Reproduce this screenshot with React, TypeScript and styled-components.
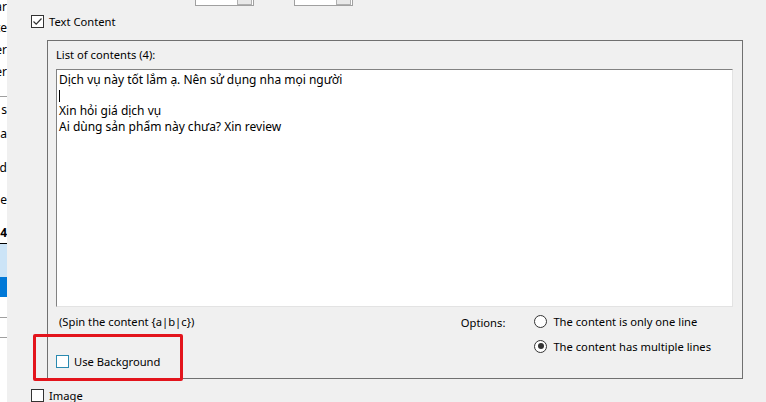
import React from "react";
import styled, { createGlobalStyle } from "styled-components";

const Global = createGlobalStyle`
  html, body { margin: 0; padding: 0; background: #f0f0f0; overflow: hidden; }
  body { font-family: "Noto Sans", "Open Sans", sans-serif; font-size: 11.2px; color: #000; }
`;

const Page = styled.div`
  width: 766px;
  height: 402px;
  display: flex;
  position: relative;
  overflow: hidden;
  background: #f0f0f0;
`;

const SideList = styled.div`
  width: 7px;
  flex: none;
  background: #fff;
  overflow: hidden;
  display: flex;
  flex-direction: column;
  white-space: nowrap;
`;

const SideItem = styled.div<{ $h: number; $bg?: string; $line?: string; $bold?: boolean }>`
  height: ${(p) => p.$h}px;
  line-height: ${(p) => p.$h}px;
  background: ${(p) => p.$bg || "transparent"};
  border-bottom: ${(p) => (p.$line ? `1px solid ${p.$line}` : "none")};
  font-weight: ${(p) => (p.$bold ? 700 : 400)};
  font-size: 12px;
  display: flex;
  justify-content: flex-end;
  flex: none;
`;

const Main = styled.div`
  flex: 1;
  padding-left: 24px;
  display: flex;
  flex-direction: column;
`;

const TopRow = styled.div`
  height: 6px;
  display: flex;
  align-items: flex-end;
  padding-left: 13px;
`;

const TopLabel = styled.div`
  width: 151px;
  margin-top: -14px;
  line-height: 14px;
  align-self: flex-start;
`;

const SpinBox = styled.div`
  width: 57px;
  height: 16px;
  margin-top: -11px;
  margin-right: 40px;
  border: 1px solid #a0a0a0;
  background: #fff;
  display: flex;
  justify-content: flex-end;
`;

const SpinBtn = styled.div`
  width: 13px;
  height: 12px;
  margin-top: 2px;
  margin-right: 1px;
  border: 1px solid #b0b0b0;
  background: #e8e8e8;
`;

const CheckRow = styled.label<{ $mt: number }>`
  display: flex;
  align-items: center;
  gap: 5px;
  margin-top: ${(p) => p.$mt}px;
  height: 14px;
`;

const Box = styled.span<{ $color?: string }>`
  width: 11px;
  height: 11px;
  border: 1px solid ${(p) => p.$color || "#333"};
  background: #fff;
  display: inline-flex;
  align-items: center;
  justify-content: center;
  flex: none;
`;

const Group = styled.div`
  margin-top: 12px;
  margin-left: 16px;
  width: 696px;
  height: 340px;
  border: 1px solid #707070;
  box-sizing: border-box;
  padding: 6px 8px 0 8px;
  display: flex;
  flex-direction: column;
`;

const GroupLabel = styled.div`
  height: 16px;
  line-height: 16px;
`;

const TextArea = styled.div`
  margin-top: 6px;
  width: 677px;
  height: 238px;
  box-sizing: border-box;
  background: #fff;
  border-top: 1px solid #828282;
  border-left: 1px solid #828282;
  border-right: 1px solid #e3e3e3;
  border-bottom: 1px solid #e3e3e3;
  padding: 2px 2px;
  font-size: 12px;
  line-height: 15.5px;
  white-space: pre;
`;

const Caret = styled.span`
  display: inline-block;
  width: 1px;
  height: 12px;
  background: #000;
  vertical-align: -2px;
`;

const Bottom = styled.div`
  display: flex;
  justify-content: space-between;
  padding-left: 3px;
  margin-top: 7px;
`;

const OptionsArea = styled.div`
  display: flex;
  gap: 29px;
  margin-right: 23px;
`;

const OptionsLabel = styled.div`
  margin-top: 1px;
`;

const Radios = styled.div`
  display: flex;
  flex-direction: column;
  gap: 11px;
`;

const RadioRow = styled.label`
  display: flex;
  align-items: center;
  gap: 6px;
  height: 14px;
`;

const Radio = styled.span<{ $on?: boolean }>`
  width: 11px;
  height: 11px;
  border-radius: 50%;
  border: 1px solid #333;
  background: #fff;
  display: inline-flex;
  align-items: center;
  justify-content: center;
  &::after {
    content: "";
    width: 6px;
    height: 6px;
    border-radius: 50%;
    background: ${(p) => (p.$on ? "#333" : "transparent")};
  }
`;

const Highlight = styled.div`
  position: absolute;
  left: 33px;
  top: 334px;
  width: 144px;
  height: 41px;
  border: 3px solid #e3141c;
  border-radius: 2px;
  pointer-events: none;
`;

const Tick = () => (
  <svg width="11" height="11" viewBox="0 0 11 11">
    <path d="M1.5 5.5 L4.2 8.2 L9.5 2.5" fill="none" stroke="#333" strokeWidth="1.2" />
  </svg>
);

export default function App() {
  return (
    <Page>
      <Global />
      <SideList>
        <SideItem $h={14}>ar</SideItem>
        <SideItem $h={28}>te</SideItem>
        <SideItem $h={16}>er</SideItem>
        <SideItem $h={28}>er</SideItem>
        <SideItem $h={10} $line="#a0a0a0" />
        <SideItem $h={26}>s</SideItem>
        <SideItem $h={22}>a</SideItem>
        <SideItem $h={46}>d</SideItem>
        <SideItem $h={18}>e</SideItem>
        <SideItem $h={14} />
        <SideItem $h={20} $bold $line="#000">4</SideItem>
        <SideItem $h={33} $bg="#cce4f7" />
        <SideItem $h={20} $bg="#0078d7" />
        <SideItem $h={20} $line="#a0a0a0" />
        <SideItem $h={19} $line="#a0a0a0" />
      </SideList>
      <Main>
        <TopRow>
          <TopLabel>Range of length (min / max):</TopLabel>
          <SpinBox><SpinBtn /></SpinBox>
          <SpinBox><SpinBtn /></SpinBox>
        </TopRow>
        <CheckRow $mt={8}>
          <Box><Tick /></Box>
          <span>Text Content</span>
        </CheckRow>
        <Group>
          <GroupLabel>List of contents (4):</GroupLabel>
          <TextArea>
            {"Dịch vụ này tốt lắm ạ. Nên sử dụng nha mọi người\n"}
            <Caret />
            {"\nXin hỏi giá dịch vụ\nAi dùng sản phẩm này chưa? Xin review"}
          </TextArea>
          <Bottom>
            <span>(Spin the content {"{a|b|c}"})</span>
            <OptionsArea>
              <OptionsLabel>Options:</OptionsLabel>
              <Radios>
                <RadioRow><Radio />The content is only one line</RadioRow>
                <RadioRow><Radio $on />The content has multiple lines</RadioRow>
              </Radios>
            </OptionsArea>
          </Bottom>
          <CheckRow $mt={1}>
            <Box $color="#2a8ab0" />
            <span>Use Background</span>
          </CheckRow>
        </Group>
        <CheckRow $mt={9}>
          <Box />
          <span>Image</span>
        </CheckRow>
      </Main>
      <Highlight />
    </Page>
  );
}
